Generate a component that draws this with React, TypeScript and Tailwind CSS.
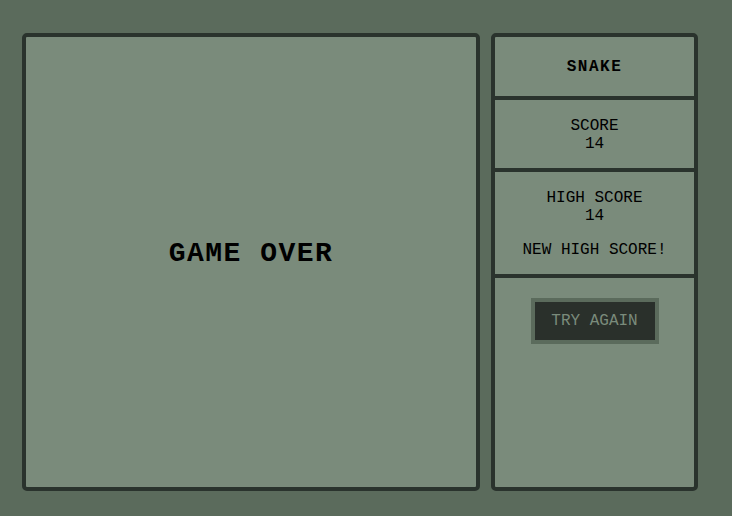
export default function App() {
  const mono = { fontFamily: '"Liberation Mono", "Courier New", monospace' };

  return (
    <div className="min-h-[516px] w-full bg-[#5b6b5c] pl-[22px] pt-[33px]" style={mono}>
      <div className="flex gap-[11px]">
        {/* Board */}
        <div className="flex h-[458px] w-[458px] items-center justify-center rounded-[5px] border-4 border-[#2a332d] bg-[#7a8b7b] pb-[17px]">
          <h1 className="text-[28px] font-bold tracking-[1.5px] text-black">GAME OVER</h1>
        </div>

        {/* Side panel */}
        <div className="flex h-[458px] w-[207px] flex-col rounded-[5px] border-4 border-[#2a332d] bg-[#7a8b7b] text-black">
          <div className="flex h-[63px] items-center justify-center border-b-4 border-[#2a332d]">
            <h2 className="text-[16px] font-bold tracking-[1.5px] leading-[18px]">SNAKE</h2>
          </div>

          <div className="border-b-4 border-[#2a332d] pt-[17px] pb-[15px] text-center text-[16px] leading-[18px]">
            <p>SCORE</p>
            <p>14</p>
          </div>

          <div className="border-b-4 border-[#2a332d] pt-[17px] pb-[15px] text-center text-[16px] leading-[18px]">
            <p>HIGH SCORE</p>
            <p>14</p>
            <p className="mt-4">NEW HIGH SCORE!</p>
          </div>

          <div className="flex justify-center pt-5">
            <button className="h-[46px] w-[128px] border-4 border-[#5b6b5c] bg-[#2a302b] text-[16px] leading-[18px] text-[#7a8b7b]">
              TRY AGAIN
            </button>
          </div>
        </div>
      </div>
    </div>
  );
}
